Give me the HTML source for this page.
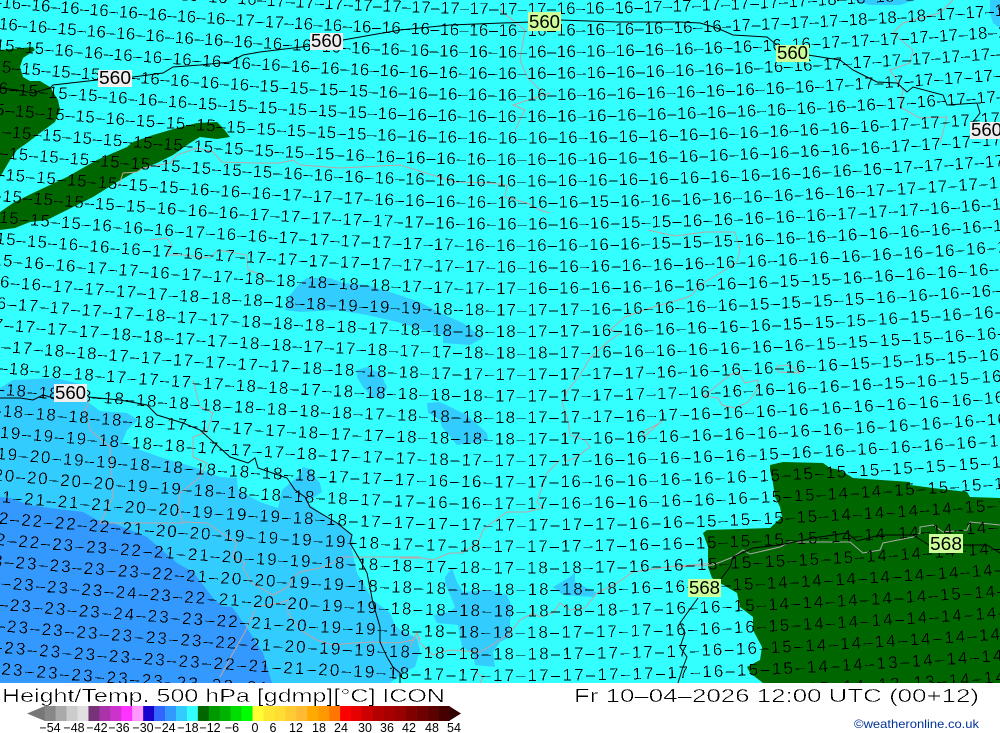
<!DOCTYPE html>
<html><head><meta charset="utf-8"><title>Height/Temp. 500 hPa</title>
<style>
html,body{margin:0;padding:0;background:#fff}
svg{display:block;font-family:"Liberation Sans",sans-serif}
.r{font-size:17px;fill:#000;stroke:#fff;stroke-width:.25}
.l{font-size:18px;fill:#000}
.c{fill:none;stroke:#000;stroke-width:1}
.g{fill:none;stroke:#c2a3a3;stroke-width:1}
.t{font-size:18.5px;fill:#000;stroke:#fff;stroke-width:.5}
.s{font-size:12.5px;fill:#000;text-anchor:middle}
</style></head><body>
<svg width="1000" height="733" viewBox="0 0 1000 733" xmlns="http://www.w3.org/2000/svg">
<defs><path id="p" d="M-60 -5.5C100 9 350 28 510 28C680 28 850 19 1060 4"/>
<filter id="b" filterUnits="userSpaceOnUse" x="0" y="0" width="1000" height="733"><feComponentTransfer><feFuncA type="discrete" tableValues="0 0 1 1 1"/></feComponentTransfer></filter>
<filter id="t" filterUnits="userSpaceOnUse" x="0" y="0" width="1000" height="733" color-interpolation-filters="sRGB"><feColorMatrix type="matrix" values="0 0 0 0 0 0 0 0 0 0 0 0 0 0 0 -1 0 0 0 1"/><feComponentTransfer><feFuncA type="discrete" tableValues="0 0 1 1 1"/></feComponentTransfer></filter>
<filter id="u" filterUnits="userSpaceOnUse" x="0" y="684" width="1000" height="25" color-interpolation-filters="sRGB"><feColorMatrix type="matrix" values="0 0 0 0 0 0 0 0 0 0 0 0 0 0 0 -1 0 0 0 1"/><feComponentTransfer><feFuncA type="discrete" tableValues="0 0 1 1 1"/></feComponentTransfer></filter></defs>
<rect width="1000" height="733" fill="#33ffff"/>
<polygon fill="#33ccff" points="853,0 870,5 900,5 915,0"/>
<polygon fill="#33ccff" points="990,0 990,13 993,23 1000,28 1000,0"/>
<polygon fill="#33ccff" points="285,310 290,295 300,283 307,278 330,278 343,283 367,285 390,292 420,302 440,313 463,323 483,338 470,345 443,343 443,335 423,330 397,322 367,315 337,310 300,312"/>
<polygon fill="#33ccff" points="357,370 367,367 380,373 387,387 383,397 373,398 363,387 357,377"/>
<polygon fill="#33ccff" points="427,403 440,402 467,415 487,433 488,440 473,443 457,445 442,427 440,420 428,413"/>
<polygon fill="#33ccff" points="452,568 457,582 463,592 490,590 507,595 512,607 510,623 510,637 500,642 493,652 495,667 475,665 473,653 462,647 458,625 437,623 433,615 450,612 455,607 445,583 445,577"/>
<polygon fill="#33ccff" points="575,572 575,582 597,593 593,597 563,595 553,587 570,577"/>
<polygon fill="#33ccff" points="0,388 13,380 55,378 85,385 85,400 100,411 127,413 138,420 127,430 122,442 140,450 160,457 197,468 220,477 237,478 238,490 260,502 278,508 282,490 302,473 302,467 308,468 320,483 322,492 307,502 323,515 337,523 350,533 353,540 352,550 355,565 357,573 373,600 390,613 395,625 400,630 417,638 420,650 415,667 403,673 390,683 0,683"/>
<polygon fill="#3399ff" points="0,497 10,498 30,505 50,508 83,512 97,520 113,523 147,537 177,563 193,572 213,598 222,606 232,607 245,625 263,653 272,683 0,683"/>
<polygon fill="#006600" points="0,50 33,47 35,50 23,58 20,67 23,77 30,81 40,81 50,87 58,100 60,110 55,122 40,133 27,143 17,150 10,160 0,177"/>
<polygon fill="#006600" points="0,212 13,203 33,193 67,177 97,160 127,147 133,142 153,135 177,128 197,123 217,122 223,128 230,137 217,139 200,137 190,143 173,155 157,163 133,173 117,182 93,197 67,210 47,220 30,222 15,228 0,230"/>
<polygon fill="#006600" points="770,465 783,462 823,463 830,468 840,470 853,478 910,482 910,485 933,488 967,492 970,497 1000,498 1000,683 763,683 750,673 747,667 760,660 762,647 753,630 753,617 740,607 737,593 720,583 712,578 708,567 708,547 703,533 707,530 770,528 782,517 780,507 775,497 773,483 770,470"/>
<polyline class="g" points="118,188 123,173 137,172 143,168 170,163 177,155 197,148 213,152 222,162 253,163 280,163 293,160 300,165 340,168 400,165 455,182 490,183 507,185 505,197 527,203 540,210 550,213"/>
<polyline class="g" points="150,240 167,238 172,245 167,255 183,255 210,258 218,250 247,255 248,270 263,275 265,280"/>
<polyline class="g" points="193,380 200,407 213,413 207,432 193,437 193,457 207,463 200,477 180,493 178,507 183,523 143,523 100,523 113,497 110,447 90,430 85,410 90,400"/>
<polyline class="g" points="183,522 207,523 225,535 237,543 232,557 245,563 243,568 252,583 273,595 288,587 292,578 300,572 320,568 333,563 340,557 387,557 420,557"/>
<polyline class="g" points="253,607 280,603 288,600 288,613 300,630 317,640 333,645 353,643 373,642 397,643 413,640 417,633 420,640"/>
<polyline class="g" points="255,610 245,632 233,653 220,677"/>
<polyline class="g" points="500,10 525,30 520,60 527,77 545,95 550,93 513,105 525,110 515,130"/>
<polyline class="g" points="953,0 940,13 903,23 893,33 913,50 910,63 890,70 903,90 900,107 920,118 947,117 940,143"/>
<polyline class="g" points="648,230 675,236 705,232 735,232 740,250 737,262 725,270 700,285 692,295 685,298 650,308 625,317 610,330 622,332 610,340 590,358 580,375 568,390 562,402 568,420 570,435 585,440 590,447 575,458 565,462"/>
<polyline class="g" points="704,396 730,375 738,372 745,383 758,380 757,390 748,402 735,408 722,405 718,398 704,396"/>
<polyline class="g" points="777,366 790,365 800,373 778,372 777,366"/>
<polyline class="g" points="642,432 660,423 663,420 645,436 642,432"/>
<polyline class="g" points="560,460 547,473 537,502 543,508 527,512 507,512 493,522 483,530 478,543 462,553 450,553 440,557 433,560 423,558 400,558"/>
<polyline class="g" points="715,563 667,567 633,572 617,583 597,593 585,608 570,610 560,603 553,613 540,617 533,613 520,620 510,633 500,640 480,652 450,650 433,655 420,643 417,633 410,647"/>
<polyline class="g" points="475,672 483,677 480,683"/>
<polyline fill="none" stroke="#aaaaaa" points="680,567 713,565 733,557 743,550 750,554 780,547 790,542 850,542 863,553 880,550 883,543 913,537 920,533 920,527 933,525 943,532 967,530 970,522 1000,525"/>
<g class="c">
<polyline points="0,88 17,90 33,93 50,88 53,85 97,80 133,77 163,73 173,67 200,65 230,62 243,55 260,52 310,46"/>
<polyline points="343,40 400,30 450,25 530,22"/>
<polyline points="560,20 617,22 680,22 700,23 717,28 733,35 767,37 777,45"/>
<polyline points="808,55 827,58 840,60 853,70 867,77 877,82 897,83 907,92 913,87 943,95 947,105 977,103 980,113 973,122"/>
<polyline points="0,398 20,398 33,400 43,395 54,398"/>
<polyline points="88,397 120,400 147,405 157,415 183,423 200,430 220,448 230,457 248,463 255,458 258,468 287,478 295,490 305,497 310,507 337,523 352,535 350,543 360,560 367,573 373,603 380,627 380,642 387,657 393,667 400,673 400,683"/>
<polyline points="698,598 680,623 685,633 680,647 687,657 682,670 678,683"/>
<polyline points="720,580 730,567 733,557 753,548 780,545 813,538 847,533 857,541 880,535 913,535 929,545"/>
<polyline points="963,545 987,545 1000,553"/>
</g>
<g class="r" filter="url(#t)">
<rect width="1000" height="733" fill="#fff" stroke="none"/>
<text transform="translate(0,-13.5)" letter-spacing=".23"><textPath href="#p" startOffset="36.4">16–16–16–16–16–16–16–16–16–16–17–17–17–17–17–17–17–17–17–17–16–16–16–17–17–17–17–17–17–18–18–18–17–17–17–17–17–</textPath></text>
<text transform="translate(0,8)" letter-spacing=".29"><textPath href="#p" startOffset="32.8">16–16–16–16–16–16–16–16–16–17–17–16–16–16–16–16–16–16–16–16–16–16–16–16–16–16–17–17–17–17–18–18–18–17–17–17–17–</textPath></text>
<text transform="translate(0,29.5)" letter-spacing=".35"><textPath href="#p" startOffset="29.2">16–16–16–15–16–16–16–16–16–16–16–16–16–16–16–16–16–16–16–16–16–16–16–16–16–16–16–16–16–17–17–17–17–17–18–17–17–</textPath></text>
<text transform="translate(0,51)" letter-spacing=".42"><textPath href="#p" startOffset="55.2">15–15–16–16–16–16–16–16–16–16–16–16–16–16–16–16–16–16–16–16–16–16–16–16–16–16–16–16–17–17–17–17–17–17–17–17–</textPath></text>
<text transform="translate(0,72.5)" letter-spacing=".48"><textPath href="#p" startOffset="51.8">15–15–15–15–16–16–16–16–16–15–15–15–15–16–16–16–16–16–16–16–16–16–16–16–16–16–16–16–17–17–17–17–17–17–17–17–</textPath></text>
<text transform="translate(0,94)" letter-spacing=".54"><textPath href="#p" startOffset="48.4">16–15–15–15–16–16–16–15–15–15–15–15–15–16–16–16–16–16–16–16–16–16–16–16–16–16–16–16–16–16–17–16–17–17–17–17–</textPath></text>
<text transform="translate(0,115.5)" letter-spacing=".61"><textPath href="#p" startOffset="44.9">15–15–15–15–16–15–15–15–15–15–15–15–15–16–16–16–16–16–16–16–16–16–16–16–16–16–16–16–16–16–17–17–17–17–17–17–</textPath></text>
<text transform="translate(0,137)" letter-spacing=".67"><textPath href="#p" startOffset="41.5">15–15–15–15–15–15–15–15–15–15–15–15–16–16–16–16–16–16–16–16–16–16–16–16–16–16–16–16–16–16–17–17–17–17–17–17–</textPath></text>
<text transform="translate(0,158.5)" letter-spacing=".73"><textPath href="#p" startOffset="38.1">15–15–15–15–15–15–15–15–15–15–16–16–16–16–16–16–16–16–16–16–16–16–16–16–16–16–16–16–16–16–17–17–17–17–17–17–</textPath></text>
<text transform="translate(0,180)" letter-spacing=".8"><textPath href="#p" startOffset="34.7">15–15–15–15–15–15–15–16–16–16–17–17–17–16–16–16–16–16–16–16–15–16–16–16–16–16–16–16–16–17–17–17–17–17–17–</textPath></text>
<text transform="translate(0,201.5)" letter-spacing=".86"><textPath href="#p" startOffset="31.3">15–15–15–15–15–15–16–16–16–17–17–17–17–17–17–16–16–16–16–16–16–15–15–16–16–16–16–16–17–17–17–16–16–16–16–</textPath></text>
<text transform="translate(0,223)" letter-spacing=".92"><textPath href="#p" startOffset="27.8">15–15–15–15–16–16–16–17–16–16–17–17–17–17–17–17–16–16–16–16–16–16–15–15–15–16–16–16–16–16–16–16–16–16–</textPath></text>
<text transform="translate(0,244.5)" letter-spacing=".99"><textPath href="#p" startOffset="55.7">15–15–16–16–16–17–16–17–17–17–17–17–17–17–17–17–16–16–16–16–16–16–16–16–16–16–16–16–16–16–16–16–16–</textPath></text>
<text transform="translate(0,266)" letter-spacing="1.05"><textPath href="#p" startOffset="52.5">15–16–16–17–17–16–17–17–18–18–18–18–18–17–17–17–17–16–16–16–16–16–16–16–16–15–15–16–16–16–16–16–16–</textPath></text>
<text transform="translate(0,287.5)" letter-spacing="1.11"><textPath href="#p" startOffset="49.3">16–16–17–17–17–17–18–18–18–18–18–19–19–19–18–18–17–17–17–16–16–16–16–16–15–15–15–15–16–16–16–16–16–</textPath></text>
<text transform="translate(0,309)" letter-spacing="1.18"><textPath href="#p" startOffset="46">16–17–17–17–17–18–17–17–18–18–18–18–17–18–18–18–18–17–17–16–16–16–16–16–16–15–15–15–16–15–16–16–16–</textPath></text>
<text transform="translate(0,330.5)" letter-spacing="1.24"><textPath href="#p" startOffset="42.8">17–17–17–17–18–18–17–17–18–18–17–17–18–17–17–18–18–18–17–16–16–16–16–16–16–16–15–15–15–15–16–16–16–</textPath></text>
<text transform="translate(0,352)" letter-spacing="1.3"><textPath href="#p" startOffset="39.6">17–17–18–18–17–17–17–17–17–17–18–18–18–18–17–17–17–17–17–17–17–16–16–16–16–16–16–15–15–15–15–16–16–</textPath></text>
<text transform="translate(0,373.5)" letter-spacing="1.37"><textPath href="#p" startOffset="36.3">17–18–18–18–17–17–17–17–18–18–17–18–18–18–18–18–17–17–17–17–17–17–16–16–16–16–16–16–15–16–15–16–16–</textPath></text>
<text transform="translate(0,395)" letter-spacing="1.43"><textPath href="#p" startOffset="33.1">18–18–18–18–18–18–18–18–18–18–18–18–17–18–18–18–18–17–17–17–16–17–16–16–16–16–16–16–16–16–16–16–</textPath></text>
<text transform="translate(0,416.5)" letter-spacing="1.49"><textPath href="#p" startOffset="29.9">18–18–18–18–18–18–17–17–17–17–18–17–17–18–18–18–18–17–17–16–16–16–16–16–16–16–16–16–16–16–16–16–</textPath></text>
<text transform="translate(0,438)" letter-spacing="1.56"><textPath href="#p" startOffset="26.7">19–19–19–19–18–18–18–17–17–17–18–17–17–17–18–17–17–17–17–16–16–16–16–16–15–16–16–16–16–16–16–16–</textPath></text>
<text transform="translate(0,459.5)" letter-spacing="1.62"><textPath href="#p" startOffset="23.4">19–19–20–19–19–18–18–18–18–18–18–17–17–17–16–16–17–17–16–16–16–16–16–16–15–15–15–15–15–15–15–15–</textPath></text>
<text transform="translate(0,481)" letter-spacing="1.68"><textPath href="#p" startOffset="53.6">20–20–20–20–19–19–18–18–18–18–18–17–17–16–16–17–17–16–16–16–16–16–16–15–15–14–14–15–15–15–15–</textPath></text>
<text transform="translate(0,502.5)" letter-spacing="1.75"><textPath href="#p" startOffset="50.6">21–21–21–21–20–20–19–19–19–18–18–17–17–17–17–17–17–17–17–16–16–15–15–15–15–14–14–14–14–15–15–</textPath></text>
<text transform="translate(0,524)" letter-spacing="1.81"><textPath href="#p" startOffset="47.5">22–22–22–22–21–20–20–19–19–19–19–18–17–17–18–17–17–17–17–16–16–15–15–15–15–14–14–14–14–14–14–</textPath></text>
<text transform="translate(0,545.5)" letter-spacing="1.87"><textPath href="#p" startOffset="44.5">22–22–23–23–22–21–21–20–19–19–18–18–18–17–18–17–18–18–17–16–16–15–15–15–15–15–14–14–14–14–14–</textPath></text>
<text transform="translate(0,567)" letter-spacing="1.94"><textPath href="#p" startOffset="41.4">23–23–23–23–23–22–21–20–20–19–19–18–18–18–18–18–18–18–18–16–16–16–15–14–14–14–14–14–14–14–14–</textPath></text>
<text transform="translate(0,588.5)" letter-spacing="2"><textPath href="#p" startOffset="38.4">23–23–23–23–24–23–22–21–20–20–19–19–18–18–18–18–18–18–18–17–16–16–15–14–14–14–14–14–15–14–14–</textPath></text>
<text transform="translate(0,610)" letter-spacing="2.06"><textPath href="#p" startOffset="35.4">23–23–23–23–24–23–23–22–21–20–19–19–18–18–18–18–18–17–17–17–16–16–16–15–14–14–14–14–14–14–14–</textPath></text>
<text transform="translate(0,631.5)" letter-spacing="2.13"><textPath href="#p" startOffset="32.3">23–23–23–23–23–23–23–22–21–20–19–19–18–18–18–18–18–17–17–17–17–16–16–15–14–14–14–14–14–14–14–</textPath></text>
<text transform="translate(0,653)" letter-spacing="2.19"><textPath href="#p" startOffset="29.3">23–23–23–23–23–23–23–22–21–21–20–19–18–17–17–17–17–17–17–17–17–16–15–15–14–14–13–14–14–14–14–</textPath></text>
<text transform="translate(0,674.5)" letter-spacing="2.25"><textPath href="#p" startOffset="26.2">23–23–23–23–23–23–23–22–21–21–20–19–18–17–17–17–17–17–17–17–17–16–16–15–15–14–13–13–14–14–14–</textPath></text>
</g>
<g filter="url(#b)">
<rect x="98" y="70" width="34" height="17" fill="#eeeeee"/><text class="l" x="99" y="84" textLength="32" lengthAdjust="spacingAndGlyphs">560</text>
<rect x="310" y="33" width="33" height="17" fill="#eeeeee"/><text class="l" x="311" y="47" textLength="31" lengthAdjust="spacingAndGlyphs">560</text>
<rect x="54" y="384" width="33" height="18" fill="#eeeeee"/><text class="l" x="55" y="399" textLength="31" lengthAdjust="spacingAndGlyphs">560</text>
<rect x="970" y="122" width="30" height="17" fill="#eeeeee"/><text class="l" x="971" y="136" textLength="31" lengthAdjust="spacingAndGlyphs">560</text>
<rect x="528" y="12" width="33" height="19" fill="#ccff99"/><text class="l" x="529" y="28" textLength="31" lengthAdjust="spacingAndGlyphs">560</text>
<rect x="776" y="45" width="33" height="17" fill="#ccff99"/><text class="l" x="777" y="59" textLength="31" lengthAdjust="spacingAndGlyphs">560</text>
<rect x="688" y="579" width="33" height="18" fill="#ccff99"/><text class="l" x="689" y="594" textLength="31" lengthAdjust="spacingAndGlyphs">568</text>
<rect x="929" y="534" width="34" height="19" fill="#ccff99"/><text class="l" x="930" y="550" textLength="32" lengthAdjust="spacingAndGlyphs">568</text>
</g>
<rect x="0" y="683" width="1000" height="50" fill="#fff"/>
<g filter="url(#u)">
<rect y="684" width="1000" height="25" fill="#fff"/>
<text class="t" x="2" y="702" textLength="443" lengthAdjust="spacingAndGlyphs">Height/Temp. 500 hPa [gdmp][°C] ICON</text>
<text class="t" x="574" y="702" textLength="405" lengthAdjust="spacingAndGlyphs">Fr 10–04–2026 12:00 UTC (00+12)</text>
</g>
<text x="854" y="728" font-size="12" fill="#003399" textLength="125" lengthAdjust="spacingAndGlyphs">©weatheronline.co.uk</text>
<polygon points="27,713.5 45,706 45,721" fill="#777777"/>
<polygon points="449,706 461,713.5 449,721" fill="#330000"/>
<g transform="translate(44.7,706)">
<rect x="0" width="11.2" height="15" fill="#888888"/><rect x="10.94" width="11.2" height="15" fill="#aaaaaa"/><rect x="21.88" width="11.2" height="15" fill="#cccccc"/><rect x="32.82" width="11.2" height="15" fill="#e0e0e0"/>
<rect x="43.76" width="11.2" height="15" fill="#773377"/><rect x="54.7" width="11.2" height="15" fill="#aa33aa"/><rect x="65.64" width="11.2" height="15" fill="#cc33cc"/><rect x="76.58" width="11.2" height="15" fill="#ff33ff"/><rect x="87.52" width="11.2" height="15" fill="#ff99ff"/>
<rect x="98.46" width="11.2" height="15" fill="#1a00cc"/><rect x="109.4" width="11.2" height="15" fill="#3366ff"/><rect x="120.34" width="11.2" height="15" fill="#3399ff"/><rect x="131.28" width="11.2" height="15" fill="#33ccff"/><rect x="142.22" width="11.2" height="15" fill="#33ffff"/>
<rect x="153.16" width="11.2" height="15" fill="#006600"/><rect x="164.1" width="11.2" height="15" fill="#009900"/><rect x="175.04" width="11.2" height="15" fill="#00b300"/><rect x="185.98" width="11.2" height="15" fill="#00dd00"/><rect x="196.92" width="11.2" height="15" fill="#00ff00"/>
<rect x="207.86" width="11.2" height="15" fill="#ffff33"/><rect x="218.8" width="11.2" height="15" fill="#ffe633"/><rect x="229.74" width="11.2" height="15" fill="#ffdd33"/><rect x="240.68" width="11.2" height="15" fill="#ffcc33"/><rect x="251.62" width="11.2" height="15" fill="#ffbb33"/><rect x="262.56" width="11.2" height="15" fill="#ffaa00"/><rect x="273.5" width="11.2" height="15" fill="#ff9900"/><rect x="284.44" width="11.2" height="15" fill="#ff7700"/>
<rect x="295.38" width="11.2" height="15" fill="#ff0000"/><rect x="306.32" width="11.2" height="15" fill="#e60000"/><rect x="317.26" width="11.2" height="15" fill="#cc0000"/><rect x="328.2" width="11.2" height="15" fill="#b30000"/><rect x="339.14" width="11.2" height="15" fill="#a60000"/><rect x="350.08" width="11.2" height="15" fill="#990000"/><rect x="361.02" width="11.2" height="15" fill="#800000"/><rect x="371.96" width="11.2" height="15" fill="#700000"/><rect x="382.9" width="11.2" height="15" fill="#5c0000"/><rect x="393.84" width="11" height="15" fill="#470000"/>
</g>
<g class="s">
<text x="50" y="732">−54</text><text x="74" y="732">−48</text><text x="97" y="732">−42</text><text x="119" y="732">−36</text><text x="143" y="732">−30</text><text x="165" y="732">−24</text><text x="188" y="732">−18</text><text x="210" y="732">−12</text><text x="232" y="732">−6</text><text x="255" y="732">0</text><text x="273" y="732">6</text><text x="296" y="732">12</text><text x="319" y="732">18</text><text x="341" y="732">24</text><text x="365" y="732">30</text><text x="387" y="732">36</text><text x="409" y="732">42</text><text x="432" y="732">48</text><text x="454" y="732">54</text>
</g>
</svg>
</body></html>
